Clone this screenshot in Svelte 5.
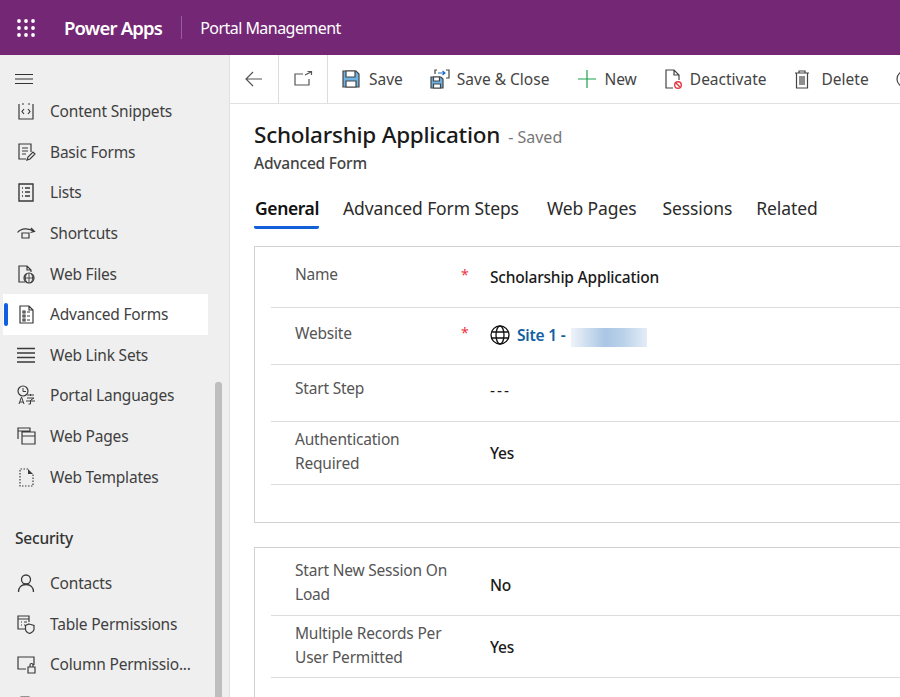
<script>
    const sideItems = [
        { name: "Content Snippets", icon: "snippet" },
        { name: "Basic Forms", icon: "basic" },
        { name: "Lists", icon: "list" },
        { name: "Shortcuts", icon: "shortcut" },
        { name: "Web Files", icon: "file" },
        { name: "Advanced Forms", icon: "advanced", active: true },
        { name: "Web Link Sets", icon: "linkset" },
        { name: "Portal Languages", icon: "lang" },
        { name: "Web Pages", icon: "pages" },
        { name: "Web Templates", icon: "template" },
    ];
    const securityItems = [
        { name: "Contacts", icon: "contact" },
        { name: "Table Permissions", icon: "table" },
        { name: "Column Permissio...", icon: "column" },
        { name: "", icon: "more" },
    ];
    const tabs = ["General", "Advanced Form Steps", "Web Pages", "Sessions", "Related"];
</script>

{#snippet sideIcon(icon)}
    <svg class="side-icon" width="20" height="20" viewBox="0 0 20 20" fill="none" stroke="#3a3a3a" stroke-width="1.2">
        {#if icon === "snippet"}
            <path d="M3 3v15h14V3M6 3h2M12 3h2M8 8l-2 2.5L8 13M12 8l2 2.5-2 2.5" />
        {:else if icon === "basic"}
            <path d="M15 10V2H3v15h7M6 6h6M6 9h6M6 12h4M11 18l1-3 5-5 2 2-5 5z" />
        {:else if icon === "list"}
            <path d="M3 2h14v17H3zM6 6h1M9 6h5M6 10h1M9 10h5M6 14h1M9 14h5" stroke-width="1.4" />
        {:else if icon === "shortcut"}
            <path d="M1.5 9.5C5 5 13 4.5 18 8.5M15 5l3.5 3.5-4 1M6 10h7v5H6z" />
        {:else if icon === "file"}
            <path d="M9 18H3V2h8l4 4v2M11 2v4h4" />
            <circle cx="13" cy="14" r="5" />
            <path d="M8 14h10M13 9v10M10.5 10c-1.5 2.5-1.5 5.500 0 8M15.5 10c1.5 2.5 1.5 5.5 0 8" stroke-width=".9" />
        {:else if icon === "advanced"}
            <path d="M4 2h9l4 4v13H4zM13 2v4h4M7 7h2v2H7zM7 11h2v2H7zM7 15h2v2H7zM11 8h3M11 12h3M11 16h3" />
        {:else if icon === "linkset"}
            <path d="M1 3.5h18M1 8h18M1 12.5h18M1 17h18" stroke-width="1.3" />
        {:else if icon === "lang"}
            <circle cx="7" cy="6" r="5" />
            <path d="M7 3v3.5h3M3 19l2.5-7L8 19M4 17h3M11 10h7M14.5 9v2M11 13h7l-3 2M14.5 15v4h-2M10 16h9" stroke-width="1" />
        {:else if icon === "pages"}
            <path d="M2 13V2h12v4M2 5h12M6 6h13v12H6zM6 10h13" />
        {:else if icon === "template"}
            <path d="M12 2H4v17h13V7" stroke-dasharray="1.5 1.5" />
            <path d="M12 2v5h5z" fill="#3a3a3a" stroke="none" />
        {:else if icon === "contact"}
            <circle cx="10" cy="6.5" r="4.5" stroke-width="1.3" />
            <path d="M2.5 19c0-4.5 3-7.5 7.5-7.5s7.5 3 7.5 7.5" stroke-width="1.3" />
        {:else if icon === "table"}
            <path d="M9 15H2V2h11v6M2 5h11M5 8h1M8 8h3M5 11h1M8 11h1M13 10l5 1.5V15c0 2-2 3.5-4.5 4.5C11 18.5 9.5 17 9.5 15v-3.5z" />
        {:else if icon === "column"}
            <path d="M10 15H2V3h16v8M14 13v-2c0-2 3-2 3 0v2" />
            <path d="M12 13h7v6h-7z" />
        {:else}
            <path d="M5 2h8l4 4v13H5z" />
        {/if}
    </svg>
{/snippet}

<div class="app">
    <header class="topbar">
        <svg class="waffle" width="18" height="18" viewBox="0 0 18 18" fill="#fff">
            {#each [2, 9, 16] as y}
                {#each [2, 9, 16] as x}
                    <circle cx={x} cy={y} r="1.9" />
                {/each}
            {/each}
        </svg>
        <span class="brand">Power Apps</span>
        <span class="divider"></span>
        <span class="appname">Portal Management</span>
    </header>

    <div class="body">
        <nav class="sidebar">
            <button class="hamburger" aria-label="Menu">
                <svg width="18" height="12" viewBox="0 0 18 12" stroke="#333" stroke-width="1.2">
                    <path d="M0 1.5h18M0 6h18M0 10.5h18" />
                </svg>
            </button>
            <ul>
                {#each sideItems as item}
                    <li class:active={item.active}>
                        {@render sideIcon(item.icon)}
                        <span>{item.name}</span>
                    </li>
                {/each}
            </ul>
            <h3>Security</h3>
            <ul>
                {#each securityItems as item}
                    <li>
                        {@render sideIcon(item.icon)}
                        <span>{item.name}</span>
                    </li>
                {/each}
            </ul>
            <div class="scrollthumb"></div>
        </nav>

        <main>
            <div class="commandbar">
                <button class="cmd-square" aria-label="Back">
                    <svg width="20" height="20" viewBox="0 0 20 20" fill="none" stroke="#555" stroke-width="1.2">
                        <path d="M18 10H2M9 3l-7 7 7 7" />
                    </svg>
                </button>
                <button class="cmd-square" aria-label="Open in new window">
                    <svg width="20" height="20" viewBox="0 0 20 20" fill="none" stroke="#555" stroke-width="1.2">
                        <path d="M10 5H2v11h14v-6M12 6l6-3M14.5 2.5h4V6" />
                    </svg>
                </button>
                <button class="cmd save">
                    <svg width="18" height="18" viewBox="0 0 18 18" fill="none" stroke="#444" stroke-width="1.2">
                        <path d="M1 1h13l3 3v13H1z" fill="#6db2e3" />
                        <path d="M4 1h9v6H4z" fill="#fff" />
                        <path d="M4 17v-6h10v6z" fill="#fff" />
                    </svg>
                    Save
                </button>
                <button class="cmd save-close">
                    <svg width="20" height="20" viewBox="0 0 20 20" fill="none" stroke="#444" stroke-width="1.2">
                        <path d="M1 8h10l2 2v9H1z" fill="#6db2e3" />
                        <path d="M3.5 8h6v4h-6zM3.5 19v-4h7v4z" fill="#fff" />
                        <path d="M5 5V1h2M16 1h3v8h-3" />
                        <path d="M8 4h7M12.5 2l2.5 2-2.5 2" stroke="#1b6ec2" />
                    </svg>
                    Save &amp; Close
                </button>
                <button class="cmd new">
                    <svg width="20" height="20" viewBox="0 0 20 20" stroke="#19a34c" stroke-width="1.2">
                        <path d="M1 10h18M10 1v18" />
                    </svg>
                    New
                </button>
                <button class="cmd deactivate">
                    <svg width="20" height="20" viewBox="0 0 20 20" fill="none" stroke="#444" stroke-width="1.2">
                        <path d="M10 19H3V1h8l5 5v5M11 1v5h5" />
                        <circle cx="15" cy="16" r="3.3" stroke="#e03a44" stroke-width="1.4" fill="#fff" />
                        <path d="M13 14l4 4" stroke="#e03a44" stroke-width="1.4" />
                    </svg>
                    Deactivate
                </button>
                <button class="cmd delete">
                    <svg width="18" height="20" viewBox="0 0 18 20" fill="none" stroke="#444" stroke-width="1.2">
                        <path d="M2 4h14M6 4V2h6v2M3.5 4v15h11V4M7 7v9M9 7v9M11 7v9" />
                    </svg>
                    Delete
                </button>
                <svg class="cut-icon" width="20" height="20" viewBox="0 0 20 20" fill="none" stroke="#444" stroke-width="1.2">
                    <circle cx="10" cy="10" r="8" />
                </svg>
            </div>

            <div class="content">
                <div class="title-line">
                    <h1>Scholarship Application</h1>
                    <span class="saved">- Saved</span>
                </div>
                <div class="entity">Advanced Form</div>

                <div class="tabs">
                    {#each tabs as tab, i}
                        <span class="tab" class:selected={i === 0}>{tab}</span>
                    {/each}
                </div>

                <section class="card first">
                    <div class="row r-name">
                        <label>Name</label><i>*</i>
                        <strong>Scholarship Application</strong>
                    </div>
                    <div class="row r-web">
                        <label>Website</label><i>*</i>
                        <div class="site">
                            <svg width="20" height="20" viewBox="0 0 20 20" fill="none" stroke="#111" stroke-width="1.3">
                                <circle cx="10" cy="10" r="9" />
                                <ellipse cx="10" cy="10" rx="4" ry="9" />
                                <path d="M1.5 7h17M1.5 13h17" />
                            </svg>
                            <a href="#site">Site 1 -</a>
                            <span class="blur"></span>
                        </div>
                    </div>
                    <div class="row r-step">
                        <label>Start Step</label><i></i>
                        <strong class="dashes">---</strong>
                    </div>
                    <div class="row r-auth">
                        <label>Authentication<br />Required</label><i></i>
                        <strong>Yes</strong>
                    </div>
                </section>

                <section class="card second">
                    <div class="row r-session">
                        <label>Start New Session On<br />Load</label><i></i>
                        <strong>No</strong>
                    </div>
                    <div class="row r-multi">
                        <label>Multiple Records Per<br />User Permitted</label><i></i>
                        <strong>Yes</strong>
                    </div>
                </section>
            </div>
        </main>
    </div>
</div>

<style>
    :global(body) {
        margin: 0;
        overflow: hidden;
        background: #fff;
    }
    .app {
        width: 900px;
        height: 697px;
        overflow: hidden;
        font-family: "Noto Sans", "Open Sans", sans-serif;
        color: #333;
    }
    button {
        font: inherit;
        color: inherit;
        background: none;
        border: 0;
        padding: 0;
    }

    .topbar {
        height: 55px;
        background: #742774;
        color: #fff;
        display: flex;
        align-items: center;
        padding-left: 17px;
    }
    .waffle {
        margin-right: 29px;
    }
    .brand {
        font-size: 18.5px;
        font-weight: 600;
        letter-spacing: -0.8px;
    }
    .divider {
        width: 1px;
        height: 23px;
        background: #9a5f9a;
        margin: 0 18px 0 19px;
    }
    .appname {
        font-size: 16px;
        letter-spacing: -0.54px;
    }

    .body {
        display: flex;
        height: 642px;
    }

    .sidebar {
        width: 229px;
        flex: none;
        background: #efefef;
        border-right: 1px solid #e0e0e0;
        position: relative;
        overflow: hidden;
    }
    .hamburger {
        display: block;
        height: 12px;
        padding: 18px 0 6px 15px;
        box-sizing: content-box;
    }
    .hamburger svg {
        display: block;
    }
    ul {
        list-style: none;
        margin: 0;
        padding: 0;
    }
    li {
        height: 40.6px;
        width: 205px;
        margin-left: 3px;
        padding-left: 13px;
        box-sizing: border-box;
        display: flex;
        align-items: center;
        font-size: 15.5px;
        letter-spacing: -0.2px;
        color: #3f3f3f;
        position: relative;
        white-space: nowrap;
    }
    li.active {
        background: #fff;
    }
    li.active::before {
        content: "";
        position: absolute;
        left: 1px;
        top: 9px;
        width: 4px;
        height: 23px;
        border-radius: 2px;
        background: #0f5fe0;
    }
    .side-icon {
        flex: none;
        margin-right: 14px;
    }
    h3 {
        margin: 29px 0 0 15px;
        height: 24px;
        line-height: 24px;
        font-size: 15.5px;
        font-weight: 500;
        letter-spacing: -0.2px;
        color: #333;
        padding-bottom: 13px;
    }
    .scrollthumb {
        position: absolute;
        left: 215px;
        top: 327px;
        width: 7px;
        height: 330px;
        border-radius: 3px;
        background: #bebebe;
    }

    main {
        flex: 1;
        min-width: 0;
    }
    .commandbar {
        height: 48px;
        border-bottom: 1px solid #e1e1e1;
        display: flex;
        align-items: center;
        white-space: nowrap;
        font-size: 15.5px;
        letter-spacing: -0.25px;
        color: #444;
    }
    .cmd-square {
        width: 49px;
        height: 48px;
        border-right: 1px solid #dcdcdc;
        display: flex;
        align-items: center;
        justify-content: center;
        flex: none;
    }
    .cmd {
        display: flex;
        align-items: center;
        gap: 7px;
        flex: none;
    }
    .save {
        gap: 9px;
        margin-left: 14px;
    }
    .save-close {
        margin-left: 27px;
    }
    .new {
        margin-left: 28px;
    }
    .deactivate {
        margin-left: 26px;
    }
    .delete {
        gap: 11px;
        margin-left: 26px;
    }
    .cut-icon {
        flex: none;
        margin-left: 26px;
    }

    .content {
        padding: 17px 0 0 24px;
    }
    .title-line {
        display: flex;
        align-items: baseline;
        height: 28px;
    }
    h1 {
        margin: 0;
        font-size: 22.5px;
        line-height: 28px;
        font-weight: 500;
        letter-spacing: -0.25px;
        color: #1a1a1a;
    }
    .saved {
        margin-left: 8px;
        font-size: 16px;
        color: #777;
    }
    .entity {
        margin-top: 4px;
        font-size: 15.5px;
        font-weight: 500;
        letter-spacing: -0.2px;
        color: #444;
        line-height: 20px;
    }
    .tabs {
        display: flex;
        gap: 24px;
        margin-top: 22px;
        height: 36px;
        font-size: 17.5px;
        letter-spacing: -0.1px;
        color: #2b2b2b;
    }
    .tab {
        height: 31px;
        line-height: 26px;
        white-space: nowrap;
    }
    .tab.selected {
        padding-left: 1px;
        font-weight: 600;
        letter-spacing: -0.4px;
        color: #111;
        border-bottom: 3px solid #1160d8;
        border-radius: 0 0 2px 2px;
    }
    .tab:nth-child(3) {
        margin-left: 4px;
    }
    .tab:nth-child(4) {
        margin-left: 2px;
    }

    .card {
        width: 700px;
        box-sizing: border-box;
        border: 1px solid #d2d2d2;
        border-right: 0;
    }
    .card.first {
        margin-top: 15px;
        height: 277px;
    }
    .card.second {
        margin-top: 24px;
        height: 200px;
    }
    .row {
        display: grid;
        grid-template-columns: 170px 25px 1fr;
        margin-left: 16px;
        padding-left: 24px;
        border-bottom: 1px solid #dcdcdc;
        box-sizing: border-box;
        align-items: start;
        font-size: 15.5px;
        letter-spacing: -0.2px;
    }
    label {
        color: #555;
        line-height: 24px;
    }
    i {
        color: #ee3540;
        font-style: normal;
        font-size: 14px;
        line-height: 24px;
        margin-left: -4px;
    }
    strong {
        font-weight: 500;
        color: #1a1a1a;
        line-height: 24px;
    }
    .dashes {
        font-weight: 400;
        letter-spacing: 2px;
    }
    .r-name { height: 61px; }
    .r-web { height: 57px; }
    .r-step { height: 57px; }
    .r-auth { height: 63px; }
    .r-session { height: 68px; }
    .r-multi { height: 62px; }

    .r-name label { padding-top: 15px; }
    .r-name i { padding-top: 16px; }
    .r-name strong { padding-top: 18px; }
    .r-web label { padding-top: 13px; }
    .r-web i { padding-top: 13px; }
    .r-step label { padding-top: 11px; }
    .r-step strong { padding-top: 13px; }
    .r-auth label { padding-top: 5px; }
    .r-auth strong { padding-top: 19px; }
    .r-session label { padding-top: 10px; }
    .r-session strong { padding-top: 25px; }
    .r-multi label { padding-top: 5px; }
    .r-multi strong { padding-top: 19px; }

    .site {
        display: flex;
        align-items: center;
        height: 24px;
        margin-top: 15px;
    }
    .site svg {
        margin-right: 7px;
    }
    .site a {
        color: #115ea3;
        font-weight: 600;
        text-decoration: none;
        white-space: pre;
    }
    .blur {
        width: 76px;
        height: 19px;
        margin: 5px 0 0 5px;
        background: linear-gradient(90deg, #eef3fa, #a9c6e4 45%, #bcd2ea 70%, #e4edf7);
    }
</style>
